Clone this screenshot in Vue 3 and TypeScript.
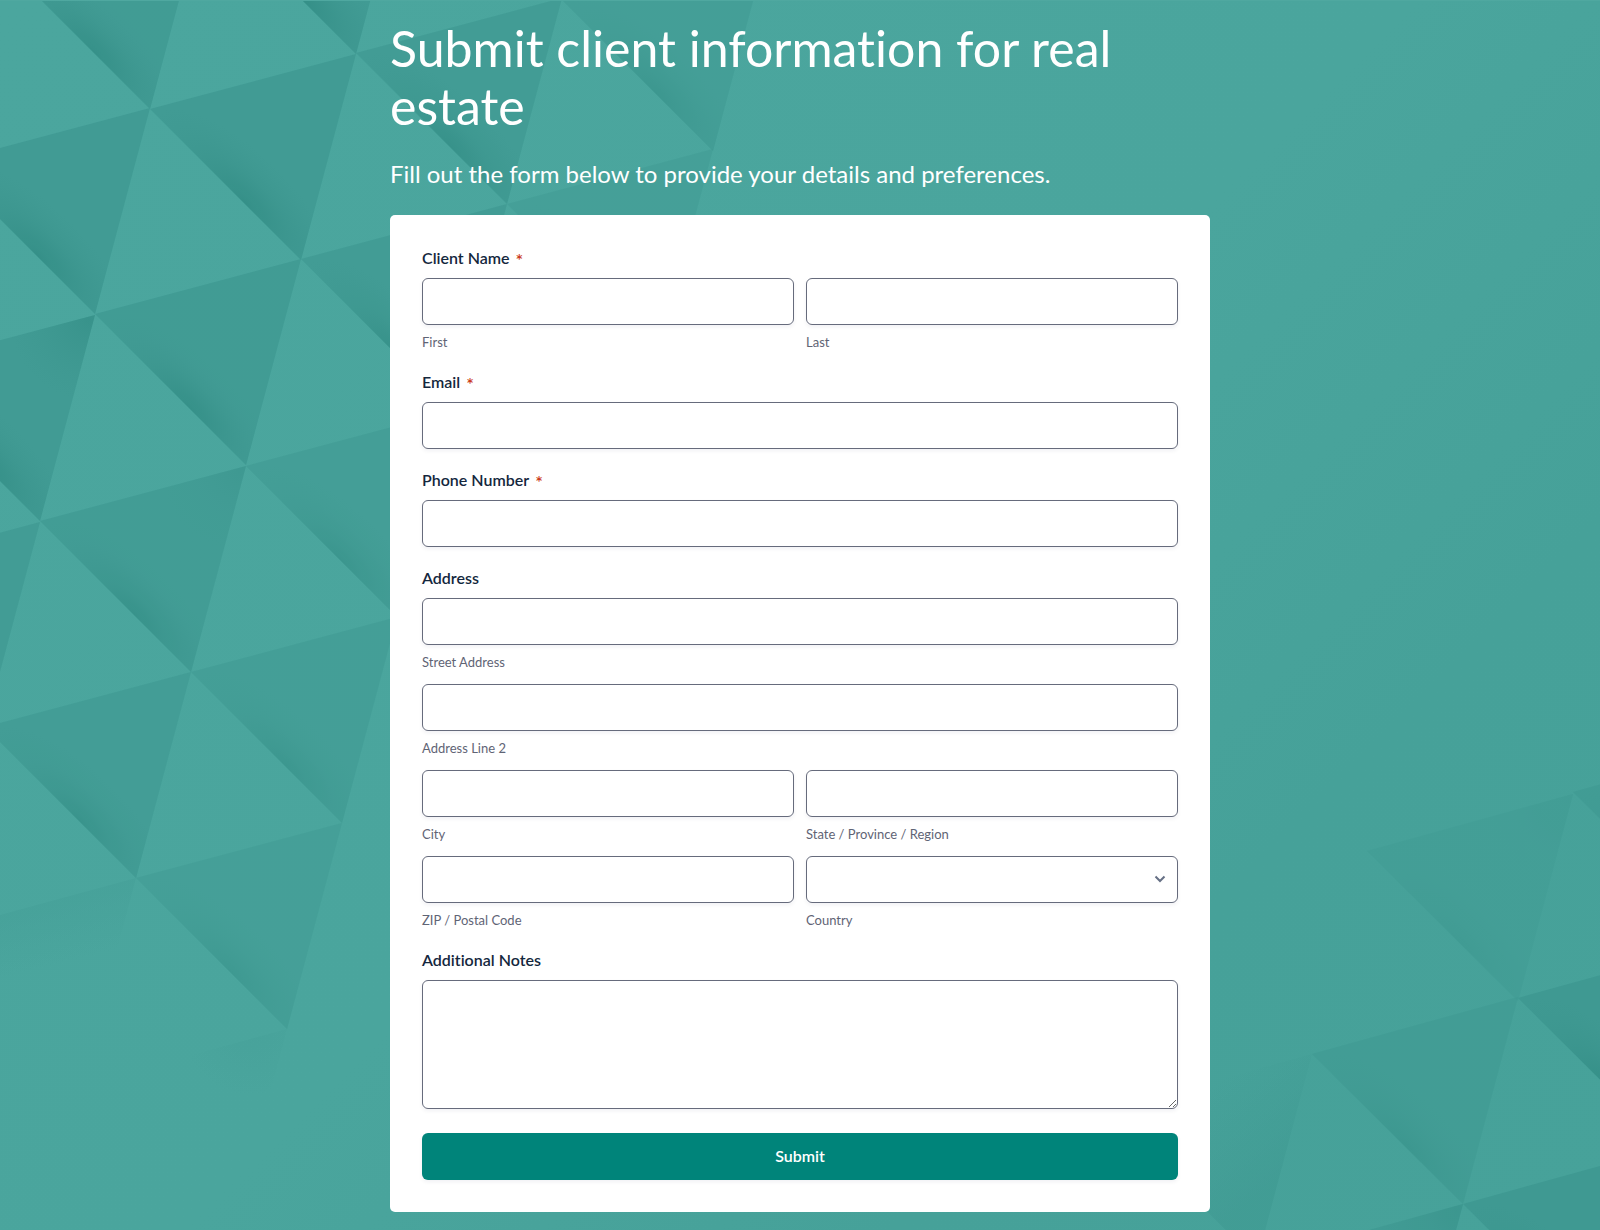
<script setup lang="ts">
import { reactive } from 'vue'

interface Facet {
  x: number
  y: number
  strength: number
  corner?: number
}

// Each facet is the shaded half of a tilted lattice cell; x / y is its left vertex.
const topFacets: Facet[] = [
  { x: -1, y: -42, strength: 0.9 },
  { x: 205, y: -97, strength: 1 },
  { x: 150, y: 109, strength: 0.95 },
  { x: -56, y: 163, strength: 0.95 },
  { x: 95, y: 314, strength: 0.9 },
  { x: 356, y: 53, strength: 0.85 },
  { x: 301, y: 259, strength: 0.85 },
  { x: 562, y: 0, strength: 0.6 },
  { x: 507, y: 204, strength: 0.5 },
  { x: -111, y: 370, strength: 0.95, corner: 0.8 },
  { x: 246, y: 466, strength: 0.65 },
  { x: 40, y: 521, strength: 0.8, corner: 0.4 },
  { x: -166, y: 577, strength: 0.85 },
  { x: 191, y: 672, strength: 0.6 },
  { x: -15, y: 727, strength: 0.75 },
  { x: 136, y: 878, strength: 0.5 },
]

const bottomFacets: Facet[] = [
  { x: 267, y: 101, strength: 0.3, corner: 0.6 },
  { x: 473, y: 42, strength: 0.6 },
  { x: 418, y: 248, strength: 0.95 },
  { x: 212, y: 304, strength: 0.5 },
  { x: 363, y: 454, strength: 0.9 },
  { x: 157, y: 511, strength: 0.7, corner: 0.7 },
]

const countries = ['United States', 'Canada', 'United Kingdom', 'Australia', 'Germany', 'France']

const form = reactive({
  first: '',
  last: '',
  email: '',
  phone: '',
  street: '',
  line2: '',
  city: '',
  region: '',
  zip: '',
  country: '',
  notes: '',
})
</script>

<template>
  <main class="page">
    <svg class="facets facets-top" width="800" height="1140" aria-hidden="true">
      <defs>
        <radialGradient
          id="edge-shade"
          gradientUnits="userSpaceOnUse"
          cx="0"
          cy="0"
          r="1"
          gradientTransform="translate(94 94) rotate(45) scale(125 48)"
        >
          <stop offset="0" stop-color="#2f8a82" stop-opacity="0.75" />
          <stop offset="0.5" stop-color="#348e86" stop-opacity="0.3" />
          <stop offset="1" stop-color="#3a948c" stop-opacity="0" />
        </radialGradient>
        <radialGradient id="corner-shade" gradientUnits="userSpaceOnUse" cx="200" cy="-50" r="80">
          <stop offset="0" stop-color="#2f8a82" stop-opacity="0.6" />
          <stop offset="1" stop-color="#3a948c" stop-opacity="0" />
        </radialGradient>
        <linearGradient id="fade-away" gradientUnits="userSpaceOnUse" x1="100" y1="885" x2="116" y2="950">
          <stop offset="0" stop-color="#429c95" stop-opacity="0.4" />
          <stop offset="1" stop-color="#429c95" stop-opacity="0" />
        </linearGradient>
        <radialGradient id="fade-tip" gradientUnits="userSpaceOnUse" cx="250" cy="1025" r="70">
          <stop offset="0" stop-color="#429c95" stop-opacity="0.35" />
          <stop offset="1" stop-color="#429c95" stop-opacity="0" />
        </radialGradient>
      </defs>
      <g
        v-for="f in topFacets"
        :key="`${f.x}:${f.y}`"
        :transform="`translate(${f.x} ${f.y})`"
        :opacity="f.strength"
      >
        <polygon points="0,0 206,-55 151,151" fill="#419b94" />
        <polygon points="0,0 206,-55 151,151" fill="url(#edge-shade)" />
        <polygon v-if="f.corner" points="0,0 206,-55 151,151" fill="url(#corner-shade)" :opacity="f.corner" />
      </g>
      <polygon points="-70,934 136,878 81,1085" fill="url(#fade-away)" />
      <polygon points="81,1085 287,1029 232,1236" fill="url(#fade-tip)" />
    </svg>

    <svg class="facets facets-bottom" width="500" height="480" aria-hidden="true">
      <defs>
        <linearGradient id="fade-left" gradientUnits="userSpaceOnUse" x1="120" y1="330" x2="190" y2="420">
          <stop offset="0" stop-color="#3c968f" stop-opacity="0" />
          <stop offset="1" stop-color="#3c968f" stop-opacity="0.45" />
        </linearGradient>
      </defs>
      <polygon points="6,361 212,304 157,511" fill="url(#fade-left)" />
      <g
        v-for="f in bottomFacets"
        :key="`${f.x}:${f.y}`"
        :transform="`translate(${f.x} ${f.y})`"
        :opacity="f.strength"
      >
        <polygon points="0,0 206,-57 151,150" fill="#3f9992" />
        <polygon points="0,0 206,-57 151,150" fill="url(#edge-shade)" />
        <polygon v-if="f.corner" points="0,0 206,-57 151,150" fill="url(#corner-shade)" :opacity="f.corner" />
      </g>
    </svg>

    <div class="content">
      <h1>Submit client information for real estate</h1>
      <p class="intro">Fill out the form below to provide your details and preferences.</p>

      <form class="card" @submit.prevent>
        <fieldset class="field">
          <legend class="label">Client Name<span class="required">*</span></legend>
          <div class="grid">
            <div class="cell">
              <input id="first" v-model="form.first" class="control" type="text" required />
              <label class="sub" for="first">First</label>
            </div>
            <div class="cell">
              <input id="last" v-model="form.last" class="control" type="text" required />
              <label class="sub" for="last">Last</label>
            </div>
          </div>
        </fieldset>

        <div class="field">
          <label class="label" for="email">Email<span class="required">*</span></label>
          <input id="email" v-model="form.email" class="control" type="email" required />
        </div>

        <div class="field">
          <label class="label" for="phone">Phone Number<span class="required">*</span></label>
          <input id="phone" v-model="form.phone" class="control" type="tel" required />
        </div>

        <fieldset class="field">
          <legend class="label">Address</legend>
          <div class="grid">
            <div class="cell wide">
              <input id="street" v-model="form.street" class="control" type="text" />
              <label class="sub" for="street">Street Address</label>
            </div>
            <div class="cell wide">
              <input id="line2" v-model="form.line2" class="control" type="text" />
              <label class="sub" for="line2">Address Line 2</label>
            </div>
            <div class="cell">
              <input id="city" v-model="form.city" class="control" type="text" />
              <label class="sub" for="city">City</label>
            </div>
            <div class="cell">
              <input id="region" v-model="form.region" class="control" type="text" />
              <label class="sub" for="region">State / Province / Region</label>
            </div>
            <div class="cell">
              <input id="zip" v-model="form.zip" class="control" type="text" />
              <label class="sub" for="zip">ZIP / Postal Code</label>
            </div>
            <div class="cell">
              <div class="select">
                <select id="country" v-model="form.country" class="control">
                  <option value=""></option>
                  <option v-for="c in countries" :key="c" :value="c">{{ c }}</option>
                </select>
                <svg class="chevron" width="12" height="8" viewBox="0 0 12 8" aria-hidden="true">
                  <path d="M1.500 1.500 6 6l4.500-4.500" fill="none" stroke="#667085" stroke-width="2" />
                </svg>
              </div>
              <label class="sub" for="country">Country</label>
            </div>
          </div>
        </fieldset>

        <div class="field">
          <label class="label" for="notes">Additional Notes</label>
          <textarea id="notes" v-model="form.notes" class="control notes"></textarea>
        </div>

        <button class="submit" type="submit">Submit</button>
      </form>
    </div>
  </main>
</template>

<style>
body {
  margin: 0;
  background: #4aa59d;
}
</style>

<style scoped>
.page {
  position: relative;
  box-sizing: border-box;
  min-height: 100vh;
  padding: 18px 24px;
  overflow: hidden;
  border-top: 1px solid #4fa8a0;
  background: linear-gradient(135deg, #4ba69e 0%, #4aa59d 50%, #46a199 75%, #47a29a 100%);
  font-family: Lato, 'Noto Sans', sans-serif;
  font-variant-ligatures: none;
  color: #14273d;
}

.facets {
  position: absolute;
  pointer-events: none;
}

.facets-top {
  top: -1px;
  left: 0;
}

.facets-bottom {
  right: 0;
  bottom: 0;
}

.content {
  position: relative;
  max-width: 820px;
  margin: 0 auto;
}

h1 {
  margin: 0;
  font-size: 50px;
  line-height: 58px;
  font-weight: 400;
  color: #fff;
}

.intro {
  margin: 24px 0 27px;
  font-size: 24px;
  line-height: 29px;
  color: #fff;
}

.card {
  padding: 32px;
  border-radius: 5px;
  background: #fff;
}

.field {
  margin: 0 0 20px;
  padding: 0;
  border: 0;
  min-width: 0;
}

.label {
  display: block;
  margin-bottom: 10px;
  padding: 0;
  font-size: 16px;
  line-height: 21px;
  font-weight: 600;
}

.required {
  margin-left: 6px;
  font-size: 18px;
  line-height: 0;
  vertical-align: -3px;
  font-weight: 600;
  color: #cb3c20;
}

.grid {
  display: grid;
  grid-template-columns: 1fr 1fr;
  gap: 13px 12px;
}

.wide {
  grid-column: 1 / -1;
}

.control {
  display: block;
  box-sizing: border-box;
  width: 100%;
  height: 47px;
  margin: 0;
  padding: 8px 12px;
  border: 1px solid #666b7c;
  border-radius: 6px;
  background: #fff;
  box-shadow: 0 2px 4px rgba(20, 20, 60, 0.06);
  font: 400 16px/24px Lato, 'Noto Sans', sans-serif;
  color: #14273d;
}

.notes {
  height: 129px;
  resize: vertical;
}

.select {
  position: relative;
}

select.control {
  appearance: none;
  padding-right: 36px;
}

.chevron {
  position: absolute;
  top: 19px;
  right: 12px;
  pointer-events: none;
}

.sub {
  display: block;
  margin-top: 8px;
  font-size: 13px;
  line-height: 18px;
  color: #5f6475;
}

.submit {
  display: block;
  width: 100%;
  height: 47px;
  margin-top: 24px;
  padding: 0 0 1px;
  border: 0;
  border-radius: 6px;
  background: #00847a;
  box-shadow: 0 2px 4px rgba(20, 20, 60, 0.06);
  font: 600 16px/24px Lato, 'Noto Sans', sans-serif;
  color: #fff;
  cursor: pointer;
}
</style>
